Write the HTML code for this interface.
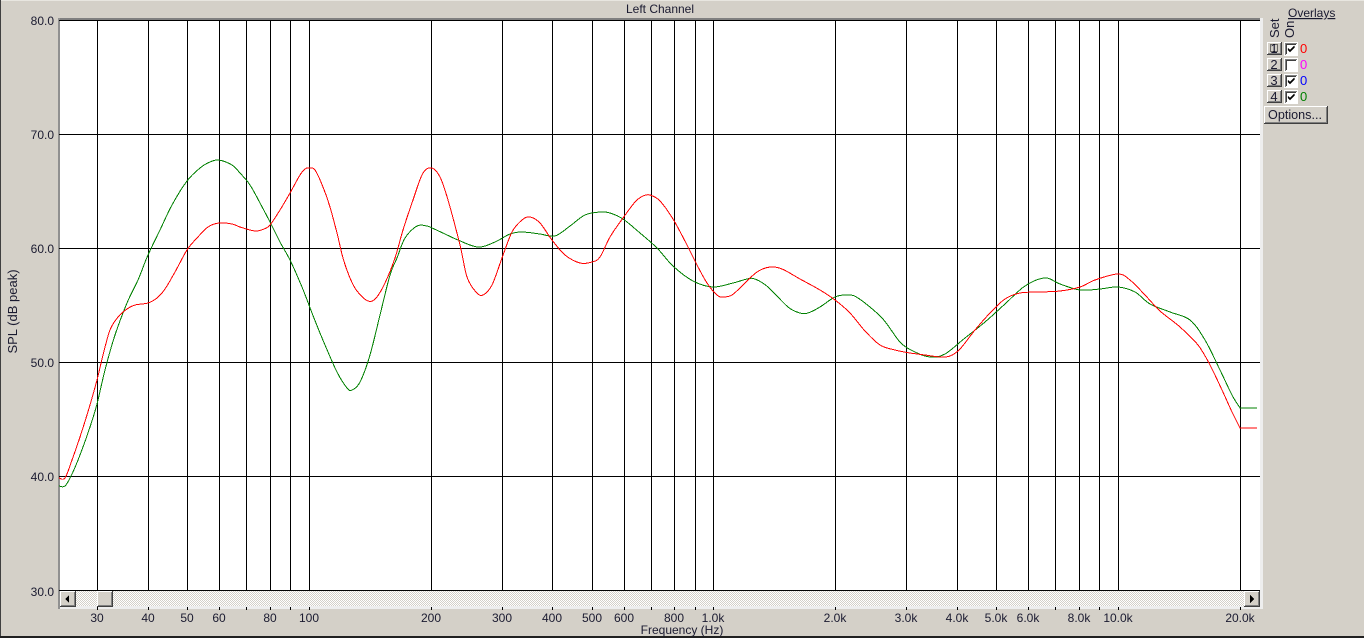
<!DOCTYPE html>
<html><head><meta charset="utf-8"><style>
html,body{margin:0;padding:0;background:#d4d0c8;width:1364px;height:638px;overflow:hidden}
svg{display:block}
text{font-family:"Liberation Sans",Arial,sans-serif;font-size:12px;fill:#1a1a30}
.y{text-anchor:end}.x{text-anchor:middle}
.b{font-size:13px}
</style></head><body>
<svg xmlns="http://www.w3.org/2000/svg" width="1364" height="638" viewBox="0 0 1364 638">
<defs>
<pattern id="d" width="2" height="2" patternUnits="userSpaceOnUse"><rect width="2" height="2" fill="#fff"/><rect width="1" height="1" fill="#d4d0c8"/><rect x="1" y="1" width="1" height="1" fill="#d4d0c8"/></pattern>
</defs>
<rect width="1364" height="638" fill="#d4d0c8"/>
<rect x="0" y="0" width="1364" height="1" fill="#e8e6e0"/>
<rect x="0" y="0" width="1" height="638" fill="#404040"/>
<rect x="0" y="636" width="1364" height="2" fill="#202020"/>
<!-- plot frame -->
<rect x="58" y="18" width="1205" height="591" fill="#eeeeee"/>
<rect x="58" y="18" width="1202" height="2" fill="#808080"/>
<rect x="58" y="18" width="2" height="591" fill="#909090"/>
<rect x="60" y="20" width="1200" height="570" fill="#fff"/>
<rect x="60" y="591" width="1200" height="15" fill="url(#d)"/>
<g shape-rendering="crispEdges" stroke="#000" stroke-width="1">
<path d="M59 20.5H1260M59 134.5H1260M59 248.5H1260M59 362.5H1260M59 476.5H1260M59 590.5H1260"/>
<path d="M97.5 20V590M148.5 20V590M187.5 20V590M219.5 20V590M246.5 20V590M270.5 20V590M290.5 20V590M309.5 20V590M431.5 20V590M502.5 20V590M552.5 20V590M592.5 20V590M624.5 20V590M651.5 20V590M674.5 20V590M695.5 20V590M713.5 20V590M835.5 20V590M906.5 20V590M957.5 20V590M996.5 20V590M1028.5 20V590M1055.5 20V590M1079.5 20V590M1099.5 20V590M1118.5 20V590M1240.5 20V590"/>
<path d="M97.5 607V610M148.5 607V610M187.5 607V610M219.5 607V610M246.5 607V610M270.5 607V610M290.5 607V610M309.5 607V610M431.5 607V610M502.5 607V610M552.5 607V610M592.5 607V610M624.5 607V610M651.5 607V610M674.5 607V610M695.5 607V610M713.5 607V610M835.5 607V610M906.5 607V610M957.5 607V610M996.5 607V610M1028.5 607V610M1055.5 607V610M1079.5 607V610M1099.5 607V610M1118.5 607V610M1240.5 607V610"/>
</g>
<!-- curves -->
<path id="g" fill="none" stroke="#008000" stroke-width="1" shape-rendering="crispEdges"/>
<path id="r" fill="none" stroke="#ff0000" stroke-width="1" shape-rendering="crispEdges"/>
<!-- scrollbar -->
<g shape-rendering="crispEdges">
<rect x="60" y="591" width="16" height="16" fill="#404040"/><rect x="60" y="591" width="15" height="15" fill="#fff"/><rect x="61" y="592" width="14" height="14" fill="#808080"/><rect x="61" y="592" width="13" height="13" fill="#d4d0c8"/>
<rect x="97" y="591" width="16" height="16" fill="#404040"/><rect x="97" y="591" width="15" height="15" fill="#fff"/><rect x="98" y="592" width="14" height="14" fill="#808080"/><rect x="98" y="592" width="13" height="13" fill="#d4d0c8"/>
<rect x="1244" y="591" width="16" height="16" fill="#404040"/><rect x="1244" y="591" width="15" height="15" fill="#fff"/><rect x="1245" y="592" width="14" height="14" fill="#808080"/><rect x="1245" y="592" width="13" height="13" fill="#d4d0c8"/>
<path d="M65 599l4-4v8zM1254 599l-4-4v8z" fill="#000"/>
</g>
<!-- y labels -->
<text class="y" x="54" y="25">80.0</text>
<text class="y" x="54" y="139">70.0</text>
<text class="y" x="54" y="253">60.0</text>
<text class="y" x="54" y="367">50.0</text>
<text class="y" x="54" y="481">40.0</text>
<text class="y" x="54" y="596">30.0</text>
<text class="x b" transform="translate(17,311.5) rotate(-90)">SPL (dB peak)</text>
<!-- x labels -->
<text class="x" x="97" y="622">30</text><text class="x" x="148" y="622">40</text><text class="x" x="187" y="622">50</text><text class="x" x="219" y="622">60</text><text class="x" x="270" y="622">80</text><text class="x" x="309" y="622">100</text><text class="x" x="431" y="622">200</text><text class="x" x="502" y="622">300</text><text class="x" x="552" y="622">400</text><text class="x" x="592" y="622">500</text><text class="x" x="624" y="622">600</text><text class="x" x="674" y="622">800</text><text class="x" x="713" y="622">1.0k</text><text class="x" x="835" y="622">2.0k</text><text class="x" x="906" y="622">3.0k</text><text class="x" x="957" y="622">4.0k</text><text class="x" x="996" y="622">5.0k</text><text class="x" x="1028" y="622">6.0k</text><text class="x" x="1079" y="622">8.0k</text><text class="x" x="1118" y="622">10.0k</text><text class="x" x="1240" y="622">20.0k</text>
<text class="x" x="682" y="634">Frequency (Hz)</text>
<text class="x" x="660" y="13">Left Channel</text>
<!-- overlays panel -->
<text x="1288" y="17" text-decoration="underline">Overlays</text>
<text class="b" transform="translate(1279,38) rotate(-90)">Set</text>
<text class="b" transform="translate(1294,38) rotate(-90)">On</text>
<g shape-rendering="crispEdges">
<rect x="1267" y="42" width="15" height="13" fill="#404040"/><rect x="1267" y="42" width="14" height="12" fill="#fff"/><rect x="1268" y="43" width="13" height="11" fill="#808080"/><rect x="1268" y="43" width="12" height="10" fill="#d4d0c8"/>
<rect x="1267" y="58" width="15" height="13" fill="#404040"/><rect x="1267" y="58" width="14" height="12" fill="#fff"/><rect x="1268" y="59" width="13" height="11" fill="#808080"/><rect x="1268" y="59" width="12" height="10" fill="#d4d0c8"/>
<rect x="1267" y="74" width="15" height="13" fill="#404040"/><rect x="1267" y="74" width="14" height="12" fill="#fff"/><rect x="1268" y="75" width="13" height="11" fill="#808080"/><rect x="1268" y="75" width="12" height="10" fill="#d4d0c8"/>
<rect x="1267" y="90" width="15" height="13" fill="#404040"/><rect x="1267" y="90" width="14" height="12" fill="#fff"/><rect x="1268" y="91" width="13" height="11" fill="#808080"/><rect x="1268" y="91" width="12" height="10" fill="#d4d0c8"/>
<rect x="1270.5" y="44.5" width="7" height="7" fill="none" stroke="#000" stroke-dasharray="1 1"/>
<!-- checkboxes -->
<rect x="1284" y="42" width="14" height="14" fill="#fff"/><rect x="1285" y="43" width="12" height="12" fill="#808080"/><rect x="1286" y="44" width="11" height="11" fill="#fff"/><rect x="1286" y="44" width="10" height="1" fill="#404040"/><rect x="1286" y="44" width="1" height="10" fill="#404040"/>
<rect x="1284" y="58" width="14" height="14" fill="#fff"/><rect x="1285" y="59" width="12" height="12" fill="#808080"/><rect x="1286" y="60" width="11" height="11" fill="#fff"/><rect x="1286" y="60" width="10" height="1" fill="#404040"/><rect x="1286" y="60" width="1" height="10" fill="#404040"/>
<rect x="1284" y="74" width="14" height="14" fill="#fff"/><rect x="1285" y="75" width="12" height="12" fill="#808080"/><rect x="1286" y="76" width="11" height="11" fill="#fff"/><rect x="1286" y="76" width="10" height="1" fill="#404040"/><rect x="1286" y="76" width="1" height="10" fill="#404040"/>
<rect x="1284" y="90" width="14" height="14" fill="#fff"/><rect x="1285" y="91" width="12" height="12" fill="#808080"/><rect x="1286" y="92" width="11" height="11" fill="#fff"/><rect x="1286" y="92" width="10" height="1" fill="#404040"/><rect x="1286" y="92" width="1" height="10" fill="#404040"/>
<!-- options -->
<rect x="1264" y="106" width="64" height="18" fill="#404040"/><rect x="1264" y="106" width="63" height="17" fill="#fff"/><rect x="1265" y="107" width="62" height="16" fill="#808080"/><rect x="1265" y="107" width="61" height="15" fill="#d4d0c8"/>
</g>
<path d="M1288 48.5l2 2 4.500-4.500M1288 49.500l2 2 4.500-4.500M1288 80.500l2 2 4.500-4.500M1288 81.500l2 2 4.500-4.500M1288 96.500l2 2 4.500-4.500M1288 97.500l2 2 4.500-4.500" fill="none" stroke="#000" stroke-width="1"/>
<text class="x b" x="1274" y="53">1</text>
<text class="x b" x="1274" y="69">2</text><text class="x b" x="1274" y="85">3</text><text class="x b" x="1274" y="101">4</text>
<text class="b" x="1300" y="53" style="fill:#ff0000">0</text>
<text class="b" x="1300" y="69" style="fill:#ff00ff">0</text>
<text class="b" x="1300" y="85" style="fill:#0000ff">0</text>
<text class="b" x="1300" y="101" style="fill:#008000">0</text>
<text class="x" x="1295" y="119" style="font-size:12.600px">Options...</text>
</svg>
<script>
var R=[59,478,65,478,72,460,80,437,90,405,97,380,103,355,110,330,118,317,127,309,135,305,148,303,157,298,165,289,175,272,187,250,197,238,208,227,219,223,232,224,240,227,255,231,264,229,270,225,280,210,290,193,300,175,305,169,309,168,315,170,323,187,330,207,337,233,343,258,350,278,357,291,368,301,376,298,385,283,395,258,403,230,413,200,423,173,432,168,440,177,448,200,460,245,467,277,476,292,483,295,492,285,502,258,512,232,522,220,530,217,540,223,552,240,565,255,580,263,592,262,600,257,610,237,623,218,635,202,643,196,650,195,660,201,673,219,687,245,697,265,707,283,717,295,723,297,732,295,743,285,757,272,770,267,782,269,800,279,820,290,835,300,850,313,865,331,880,345,895,350,910,353,925,355,940,357,950,356,960,349,975,330,990,313,1005,299,1020,293,1040,292,1060,291,1080,287,1095,280,1118,274,1130,280,1145,295,1160,311,1180,327,1198,345,1210,365,1222,390,1232,412,1240,428];
var G=[59,486,65,486,72,474,80,455,90,427,97,404,105,370,115,335,127,303,138,280,148,255,160,230,172,205,187,181,200,168,210,162,219,160,232,165,240,173,250,185,260,203,270,222,280,242,290,260,302,287,312,313,325,345,337,372,347,388,352,390,360,382,370,355,380,315,390,275,397,258,405,238,417,226,427,226,432,228,445,234,458,240,478,247,495,242,510,234,522,232,540,234,555,236,570,226,585,215,600,212,610,213,623,219,640,233,657,248,673,266,693,281,713,287,733,283,747,279,755,279,768,287,788,307,800,313,808,313,820,307,835,297,847,295,858,298,882,318,900,342,915,352,930,357,945,354,965,338,985,322,1005,304,1025,286,1045,278,1060,284,1080,290,1100,289,1118,287,1135,292,1150,304,1170,312,1190,320,1205,340,1220,370,1232,395,1240,408];
function sm(a,endX){var d="M"+a[0]+" "+a[1],n=a.length/2;for(var i=0;i<n-1;i++){var p=Math.max(i-1,0),q=Math.min(i+2,n-1);var x1=a[2*i]+(a[2*i+2]-a[2*p])/6,y1=a[2*i+1]+(a[2*i+3]-a[2*p+1])/6,x2=a[2*i+2]-(a[2*q]-a[2*i])/6,y2=a[2*i+3]-(a[2*q+1]-a[2*i+1])/6;d+="C"+x1.toFixed(1)+" "+y1.toFixed(1)+" "+x2.toFixed(1)+" "+y2.toFixed(1)+" "+a[2*i+2]+" "+a[2*i+3];}return d+"H"+endX;}
document.getElementById("r").setAttribute("d",sm(R,1257));
document.getElementById("g").setAttribute("d",sm(G,1257));
</script>
</body></html>
